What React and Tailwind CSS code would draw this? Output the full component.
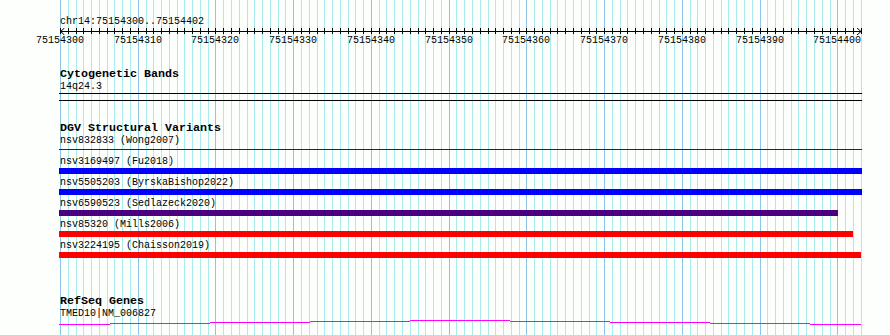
import React from "react";

const START = 75154300;
const SCALE = 7.773;
const X0 = 60;
const BASES = 104;

const px = (i) => Math.round(X0 + i * SCALE);

const variants = [
  { label: "nsv3169497 (Fu2018)", color: "bg-[#0000ff]", width: "w-[803px]" },
  { label: "nsv5505203 (ByrskaBishop2022)", color: "bg-[#0000ff]", width: "w-[803px]" },
  { label: "nsv6590523 (Sedlazeck2020)", color: "bg-[#4b0082]", width: "w-[779px]" },
  { label: "nsv85320 (Mills2006)", color: "bg-[#ff0000]", width: "w-[794px]" },
  { label: "nsv3224195 (Chaisson2019)", color: "bg-[#ff0000]", width: "w-[802px]" },
];

// exon-ish steps of the gene line
const geneSteps = [
  [59, 110, 4], [110, 210, 3], [210, 310, 2], [310, 410, 1], [410, 510, 0],
  [510, 610, 1], [610, 710, 2], [710, 810, 3], [810, 861, 4],
];

function Grid() {
  const lines = [];
  for (let i = 0; i < BASES; i++) {
    const x = px(i) + 0.5;
    lines.push(
      <line key={i} x1={x} x2={x} y1={0} y2={335} stroke={i % 10 === 0 ? "#8cc4ea" : "#a9ecf0"} />
    );
  }
  return (
    <svg className="absolute inset-0 pointer-events-none" width="890" height="335" shapeRendering="crispEdges">
      {lines}
    </svg>
  );
}

function Ruler() {
  const ticks = [];
  for (let i = 0; i < BASES; i++) {
    const x = px(i) + 0.5;
    ticks.push(<line key={i} x1={x} x2={x} y1={0} y2={6} stroke="#000" />);
  }
  return (
    <div>
      <div className="pl-[60px] mt-[16px] h-[12px]">chr14:75154300..75154402</div>
      <svg className="block" width="890" height="7" shapeRendering="crispEdges">
        <line x1={60} x2={862} y1={3.5} y2={3.5} stroke="#000" />
        {ticks}
        <polyline points="64.5,0 60.5,3.5 64.5,7" fill="none" stroke="#000" shapeRendering="auto" />
        <polyline points="857,0 861,3.5 857,7" fill="none" stroke="#000" shapeRendering="auto" />
      </svg>
      <div className="relative h-[12px]">
        {Array.from({ length: 11 }, (_, k) => (
          <span
            key={k}
            className="absolute top-0 w-[48px] text-center"
            style={{ left: px(k * 10) - 24 }}
          >
            {START + k * 10}
          </span>
        ))}
      </div>
    </div>
  );
}

function Title({ children, className = "" }) {
  return (
    <div className={"pl-[60px] font-bold text-[11.67px] leading-[13px] " + className}>{children}</div>
  );
}

export default function App() {
  return (
    <div className="relative w-[890px] h-[335px] overflow-hidden bg-[#fdfffd] text-black font-['Liberation_Mono',monospace] text-[10px] leading-[12px]">
      <Grid />
      <div className="relative">
        <Ruler />

        <Title className="mt-[21px]">Cytogenetic Bands</Title>
        <div className="pl-[60px]">14q24.3</div>
        <div className="ml-[59px] w-[803px] h-[8px] border-y border-black"></div>

        <Title className="mt-[21px]">DGV Structural Variants</Title>
        <div className="pl-[60px]">nsv832833 (Wong2007)</div>
        <div className="ml-[59px] mt-[2px] w-[803px] h-px bg-[#1414b8]"></div>

        <div className="flex flex-col">
          {variants.map((v, i) => (
            <div key={v.label} className={i === 0 ? "mt-[6px]" : "mt-[3px]"}>
              <div className="pl-[60px]">{v.label}</div>
              <div className={"ml-[59px] h-[6px] " + v.color + " " + v.width}></div>
            </div>
          ))}
        </div>

        <Title className="mt-[37px]">RefSeq Genes</Title>
        <div className="pl-[60px]">TMED10|NM_006827</div>
        <svg className="block" width="890" height="6" shapeRendering="crispEdges">
          {geneSteps.map(([a, b, y]) => (
            <line key={a} x1={a} x2={b} y1={y + 0.5} y2={y + 0.5} stroke="#ff00ff" />
          ))}
        </svg>
      </div>
    </div>
  );
}
